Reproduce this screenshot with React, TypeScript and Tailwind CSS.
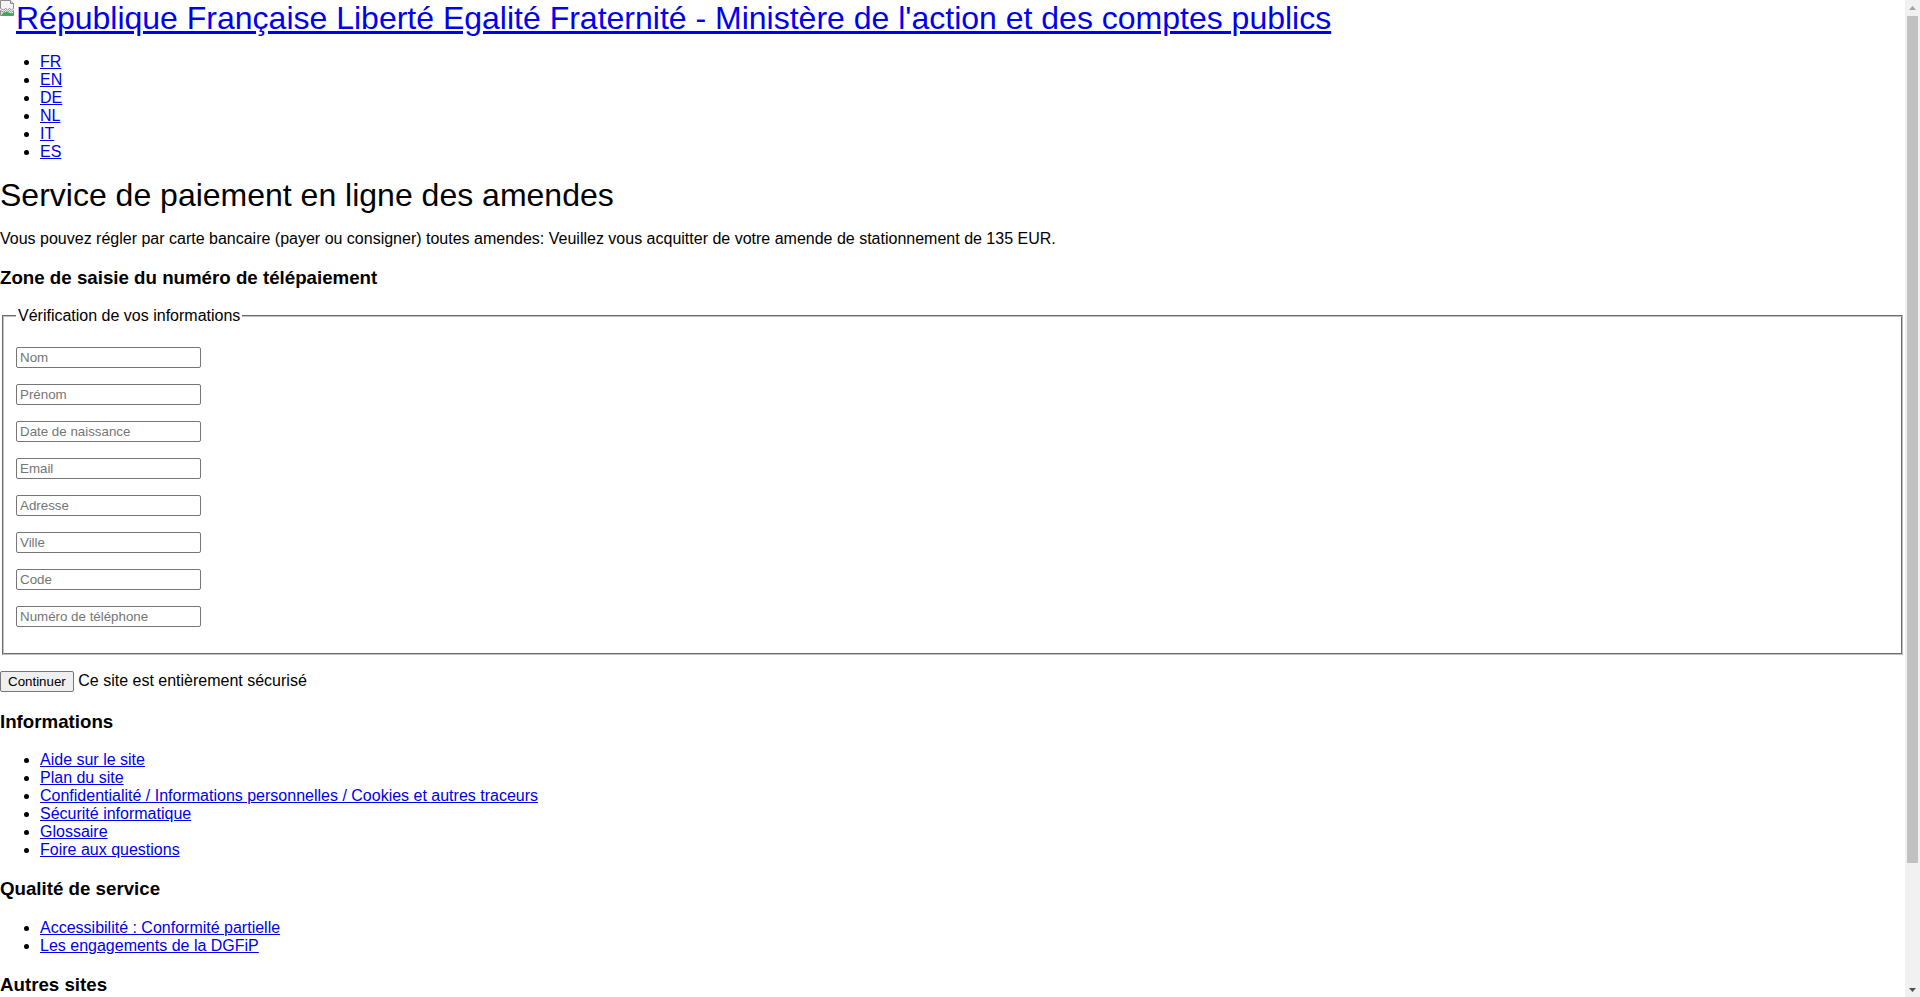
import { useState } from "react";

const langues = ["FR", "EN", "DE", "NL", "IT", "ES"];

const champs = [
  "Nom",
  "Prénom",
  "Date de naissance",
  "Email",
  "Adresse",
  "Ville",
  "Code",
  "Numéro de téléphone",
];

const infos = [
  "Aide sur le site",
  "Plan du site",
  "Confidentialité / Informations personnelles / Cookies et autres traceurs",
  "Sécurité informatique",
  "Glossaire",
  "Foire aux questions",
];

const qualite = ["Accessibilité : Conformité partielle", "Les engagements de la DGFiP"];

const autres = ["impots.gouv.fr", "economie.gouv.fr", "service-public.fr", "legifrance.gouv.fr"];

const BrokenImage = () => (
  <svg width="16" height="16" viewBox="0 0 16 16" className="inline-block align-top">
    {/* page déchirée */}
    <path d="M0.5 0.5h10l3 3v5l-2 1.5-2-1.5-2 1.5-2-1.5-2 1.5-3-1.5z" fill="#f4f4f4" stroke="#8c8c8c" />
    <path d="M10.5 0.5v3h3" fill="#ddd" stroke="#8c8c8c" />
    {/* paysage */}
    <path d="M0.5 10.5l3 1.5 2-1.5 2 1.5 2-1.5 2 1.5 2-1.5v5h-13z" fill="#cfe6f5" stroke="#8c8c8c" />
    <path d="M1 15.5c2-3 4-4 6-3.5s4 2 6.5 1v2.5z" fill="#3fa34d" />
  </svg>
);

const Lien = ({ children }: { children: React.ReactNode }) => (
  <a href="#" className="text-[#0000ee] underline">
    {children}
  </a>
);

// barre de défilement classique, comme sur la capture
const Defilement = () => (
  <div className="flex w-[15px] shrink-0 flex-col bg-[#f1f1f1]">
    <div className="flex h-[15px] items-center justify-center">
      <svg width="7" height="4" viewBox="0 0 7 4">
        <path d="M0 4L3.5 0 7 4z" fill="#a3a3a3" />
      </svg>
    </div>
    <div className="flex-1 px-[2px] pt-[1px] pb-[119px]">
      <div className="h-full bg-[#c1c1c1]" />
    </div>
    <div className="flex h-[15px] items-center justify-center">
      <svg width="7" height="4" viewBox="0 0 7 4">
        <path d="M0 0h7L3.5 4z" fill="#505050" />
      </svg>
    </div>
  </div>
);

export default function App() {
  const [valeurs, setValeurs] = useState<Record<string, string>>({});

  return (
    <div className="flex h-screen bg-white font-['Liberation_Sans',Arial,sans-serif] text-base leading-[normal] text-black">
      <div className="min-w-0 flex-1 overflow-hidden">
        {/* Bandeau */}
        <div className="text-[32px] leading-[normal]">
          <a href="#" className="text-[#0000ee] underline">
            <BrokenImage />
            République Française Liberté Egalité Fraternité - Ministère de l'action et des comptes publics
          </a>
        </div>

        {/* Langues */}
        <ul className="my-4 list-disc pl-10">
          {langues.map((l) => (
            <li key={l}>
              <Lien>{l}</Lien>
            </li>
          ))}
        </ul>

        <h1 className="mt-4 mb-4 text-[32px] font-normal leading-[normal]">Service de paiement en ligne des amendes</h1>
        <p className="my-4">
          Vous pouvez régler par carte bancaire (payer ou consigner) toutes amendes: Veuillez vous acquitter de votre
          amende de stationnement de 135 EUR.
        </p>

        <h3 className="my-[18.72px] text-[18.72px] font-bold leading-[normal]">
          Zone de saisie du numéro de télépaiement
        </h3>

        {/* Formulaire */}
        <fieldset className="mx-[2px] border-2 border-[#c0c0c0] [border-style:groove] px-3 pt-[5.6px] pb-[10px]">
          <legend className="px-[2px]">Vérification de vos informations</legend>
          {champs.map((c) => (
            <div key={c} className="my-4">
              <input
                type="text"
                placeholder={c}
                value={valeurs[c] ?? ""}
                onChange={(e) => setValeurs({ ...valeurs, [c]: e.target.value })}
                className="block h-[21px] w-[185px] rounded-[2px] border border-[#767676] bg-white px-[3px] py-[1px] text-[13.33px] leading-[normal] text-black placeholder:text-[#757575] focus:outline-none"
              />
            </div>
          ))}
        </fieldset>

        <p className="my-4">
          <button className="h-[21px] rounded-[2px] border border-[#767676] bg-[#efefef] px-[7px] py-[1px] align-baseline text-[13.33px] leading-[normal] text-black">
            Continuer
          </button>{" "}
          Ce site est entièrement sécurisé
        </p>

        {/* Pied de page */}
        <h3 className="my-[18.72px] text-[18.72px] font-bold leading-[normal]">Informations</h3>
        <ul className="my-4 list-disc pl-10">
          {infos.map((i) => (
            <li key={i}>
              <Lien>{i}</Lien>
            </li>
          ))}
        </ul>

        <h3 className="my-[18.72px] text-[18.72px] font-bold leading-[normal]">Qualité de service</h3>
        <ul className="my-4 list-disc pl-10">
          {qualite.map((q) => (
            <li key={q}>
              <Lien>{q}</Lien>
            </li>
          ))}
        </ul>

        <h3 className="my-[18.72px] text-[18.72px] font-bold leading-[normal]">Autres sites</h3>
        <ul className="my-4 list-disc pl-10">
          {autres.map((a) => (
            <li key={a}>
              <Lien>{a}</Lien>
            </li>
          ))}
        </ul>
      </div>
      <Defilement />
    </div>
  );
}
